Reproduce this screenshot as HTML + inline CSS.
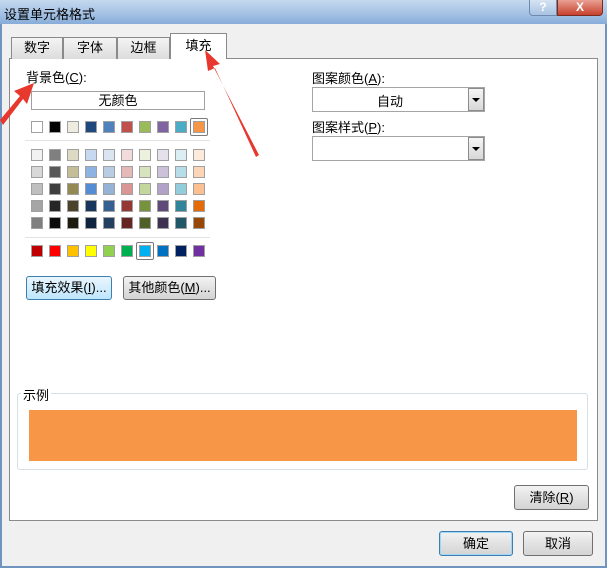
<!DOCTYPE html>
<html><head><meta charset="utf-8"><style>
*{box-sizing:border-box;margin:0;padding:0}
body{width:607px;height:568px;overflow:hidden;background:#f0f0f0;font-family:"Liberation Sans","Noto Sans CJK SC",sans-serif;font-size:12px;color:#000;position:relative}
.a{position:absolute}
.title{left:0;top:0;width:607px;height:24px;background:linear-gradient(#c4d8ee,#a3c1e4 60%,#86acd9);}
.frame{left:0;top:24px;width:607px;height:544px;border:2px solid #6f94bf;border-top:none;background:#f0f0f0}
.tab{top:37px;height:22px;border:1px solid #8a8a8a;border-bottom:none;background:linear-gradient(#f4f4f4,#dcdcdc);text-align:center;line-height:20px;font-size:13px}
.panel{left:9px;top:58px;width:589px;height:463px;background:#fff;border:1px solid #8a8a8a}
.sw{width:12px;height:12px;border:1px solid #a0a0a0}
.btn{border:1px solid #707070;border-radius:3px;background:linear-gradient(#f3f3f3,#e2e2e2 50%,#d4d4d4);text-align:center;font-size:13px}
.dd{background:#fff;border:1px solid #a5a5a5}
.arr{width:16px;border:1px solid #8c8c8c;background:linear-gradient(#f5f5f5,#d8d8d8)}
</style></head><body>
<div class="a title"></div>
<div class="a" style="left:4px;top:4px;font-size:13px">设置单元格格式</div>
<div class="a" style="left:529px;top:0;width:28px;height:16px;border:1px solid #6d8bb0;border-top:none;border-radius:0 0 0 4px;background:linear-gradient(#d5e3f3,#a9c3e2);text-align:center;color:#fff;font-weight:bold;font-size:12px;line-height:14px">?</div>
<div class="a" style="left:557px;top:0;width:46px;height:16px;border:1px solid #7a2b22;border-top:none;border-radius:0 0 4px 0;background:linear-gradient(#e8a093,#c8412d);text-align:center;color:#fff;font-weight:bold;font-size:12px;line-height:14px">X</div>
<div class="a frame"></div>
<div class="a panel"></div>
<div class="a tab" style="left:11px;width:52px">数字</div>
<div class="a tab" style="left:63px;width:54px">字体</div>
<div class="a tab" style="left:117px;width:53px">边框</div>
<div class="a tab" style="left:170px;top:33px;height:26px;width:57px;background:#fff;line-height:24px">填充</div>
<div class="a" style="left:26px;top:67px;font-size:13px">背景色(<u>C</u>):</div>
<div class="a" style="left:31px;top:91px;width:174px;height:19px;border:1px solid #a0a0a0;text-align:center;line-height:17px;font-size:13px">无颜色</div>
<div class="a" style="left:25px;top:140px;width:185px;height:1px;background:#e3e3e3"></div>
<div class="a" style="left:25px;top:237px;width:185px;height:1px;background:#e3e3e3"></div>
<div id="g"></div>
<div class="a btn" style="left:26px;top:276px;width:86px;height:24px;line-height:22px;border-color:#3c7fb1;background:linear-gradient(#eaf6fd,#bee6fd)">填充效果(<u>I</u>)...</div>
<div class="a btn" style="left:123px;top:276px;width:93px;height:24px;line-height:22px">其他颜色(<u>M</u>)...</div>
<div class="a" style="left:312px;top:68px;font-size:13px">图案颜色(<u>A</u>):</div>
<div class="a dd" style="left:312px;top:87px;width:173px;height:25px"></div>
<div class="a" style="left:312px;top:91px;width:156px;text-align:center;font-size:13px">自动</div>
<div class="a arr" style="left:468px;top:88px;height:23px"></div>
<div class="a" style="left:472px;top:98px;border:4px solid transparent;border-top:4px solid #000;border-bottom:none"></div>
<div class="a" style="left:312px;top:117px;font-size:13px">图案样式(<u>P</u>):</div>
<div class="a dd" style="left:312px;top:136px;width:173px;height:25px"></div>
<div class="a arr" style="left:468px;top:137px;height:23px"></div>
<div class="a" style="left:472px;top:147px;border:4px solid transparent;border-top:4px solid #000;border-bottom:none"></div>
<div class="a" style="left:17px;top:393px;width:571px;height:77px;border:1px solid #d5dfe5;border-radius:3px"></div>
<div class="a" style="left:21px;top:385px;background:#fff;padding:0 2px;font-size:13px">示例</div>
<div class="a" style="left:29px;top:410px;width:548px;height:51px;background:#f79646"></div>
<div class="a btn" style="left:514px;top:485px;width:75px;height:25px;line-height:23px">清除(<u>R</u>)</div>
<div class="a btn" style="left:439px;top:531px;width:74px;height:25px;line-height:23px;border-color:#3c7fb1;box-shadow:inset 0 0 0 1px #9fd6f5">确定</div>
<div class="a btn" style="left:523px;top:531px;width:70px;height:25px;line-height:23px">取消</div>
<svg class="a" style="left:0;top:0" width="607" height="568">
<polygon points="0,120 20,96 14,91 34,83 27,104 23,99 3,125" fill="#e8372c"/>
<polygon points="256,157 215,68 208,71 205,50 220,64 213,66 259,155" fill="#e8372c"/>
</svg>
<script>
var rows=[
["FFFFFF","000000","EEECE1","1F497D","4F81BD","C0504D","9BBB59","8064A2","4BACC6","F79646"],
["F2F2F2","7F7F7F","DDD9C3","C6D9F0","DBE5F1","F2DCDB","EBF1DD","E5E0EC","DBEEF3","FDEADA"],
["D8D8D8","595959","C4BD97","8DB3E2","B8CCE4","E5B9B7","D7E3BC","CCC1D9","B7DDE8","FBD5B5"],
["BFBFBF","3F3F3F","938953","548DD4","95B3D7","D99694","C3D69B","B2A2C7","92CDDC","FAC08F"],
["A5A5A5","262626","494429","17365D","366092","953734","76923C","5F497A","31859B","E36C09"],
["7F7F7F","0C0C0C","1D1B10","0F243E","244061","632423","4F6128","3F3151","205867","974806"],
["C00000","FF0000","FFC000","FFFF00","92D050","00B050","00B0F0","0070C0","002060","7030A0"]];
var ys=[121,149,166,183,200,217,245],h="";
for(var r=0;r<7;r++)for(var i=0;i<10;i++){var x=31+18*i,y=ys[r];
if((r==0&&i==9)||(r==6&&i==6))h+='<div class="a" style="left:'+(x-3)+'px;top:'+(y-3)+'px;width:18px;height:18px;border:1px solid #7a7a7a;border-radius:2px;background:#fff"></div>';
h+='<div class="a sw" style="left:'+x+'px;top:'+y+'px;background:#'+rows[r][i]+'"></div>';}
document.getElementById('g').innerHTML=h;
</script>
</body></html>
